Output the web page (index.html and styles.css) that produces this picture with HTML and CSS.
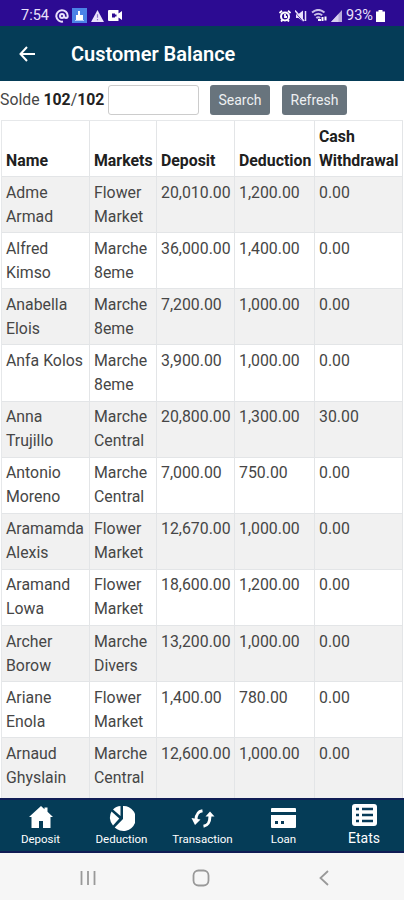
FILE: index.html
```
<!DOCTYPE html>
<html lang="en">
<head>
    <meta charset="UTF-8">
    <meta name="viewport" content="width=device-width, initial-scale=1.0">
    <title>Customer Balance</title>
    <link rel="stylesheet" href="styles.css">
</head>
<body>
    <div class="status">
        <div class="status-left">
            <span class="time">7:54</span>
            <svg width="14" height="14" viewBox="0 0 14 14" fill="none" stroke="#e9e1fb" stroke-width="2"><path d="M8 12.600A5.700 5.700 0 1 1 12.700 7c0 2.600-3.300 2.600-3.600 0"/><circle cx="7" cy="7" r="2"/></svg>
            <svg class="app" width="15" height="15" viewBox="0 0 15 15"><path fill="#4b83e6" d="M0 0h15v15H0z"/><path fill="#fff" d="M4 7h2V3h2v4h3v5H4z"/><path stroke="#b7d0fb" d="M3 12.500h9"/></svg>
            <svg width="13" height="12" viewBox="0 0 14 13"><path fill="#e9e1fb" d="M7 0l7 13H0z"/><path stroke="#8d75cc" stroke-width="1.300" d="M7 4.500v4M7 9.700V11"/></svg>
            <svg class="cam" width="14" height="11" viewBox="0 0 14 11"><path fill="#fff" d="M1 0h9.500v3.500L14 1v9l-3.500-2.500V11H1a1 1 0 0 1-1-1V1a1 1 0 0 1 1-1z"/><path fill="#2c0b92" d="M4 3.500h3v1h1.500v2H7v1H4z"/></svg>
        </div>
        <div class="status-right">
            <svg width="12" height="12" viewBox="0 0 12 12"><circle cx="6" cy="6.500" r="4" fill="none" stroke="#fff" stroke-width="2"/><path fill="none" stroke="#fff" stroke-width="1.800" d="M.5 3L3 .8M11.500 3L9 .8M2 11.500l1.500-1.500M10 11.500L8.500 10M6 4v3h2"/></svg>
            <svg width="12" height="12" viewBox="0 0 12 12"><path fill="#e9e1fb" d="M1 4h2.500L8 .5v11L3.500 8H1z"/><path stroke="#2c0b92" d="M0 2l8 9.500"/><path stroke="#e9e1fb" stroke-width="1.500" d="M0 .5l9 10.500M10.500 1v10"/></svg>
            <svg width="16" height="13" viewBox="0 0 16 13" fill="none" stroke="#c9bfe8" stroke-width="2"><path d="M1 3.500c4-3.300 8.500-3.300 12.500 0M3.300 6.300c2.600-2 5.300-2 7.900 0M5.300 9c1.300-1 2.600-1 3.900 0"/><path stroke="#fff" d="M7 11h3M11.500 8v4M14.500 7.500v4"/></svg>
            <svg width="11" height="12" viewBox="0 0 11 12"><path fill="#b9add9" d="M11 0v12H0z"/><path fill="#d9d1f0" d="M7.500 4v8H0z"/></svg>
            <span class="percent">93%</span>
            <svg class="battery" width="9" height="12" viewBox="0 0 9 12"><path fill="#fff" d="M2.500 0h4v1.500H9V12H0V1.500h2.500z"/></svg>
        </div>
    </div>

    <div class="header">
        <svg width="17" height="16" viewBox="0 0 17 16" fill="none" stroke="#fff" stroke-width="2"><path d="M8 1L1.500 8 8 15M1.500 8H16"/></svg>
        <h1>Customer Balance</h1>
    </div>

    <div class="search">
        <span class="solde">Solde <b>102</b>/<b>102</b></span>
        <input type="text" id="search">
        <button class="btn">Search</button>
        <button class="btn btn-refresh">Refresh</button>
    </div>

    <div class="content">
        <table>
            <colgroup>
                <col class="c-name"><col class="c-market"><col class="c-deposit"><col class="c-deduction"><col class="c-cash">
            </colgroup>
            <thead>
                <tr><th>Name</th><th>Markets</th><th>Deposit</th><th>Deduction</th><th>Cash<br>Withdrawal</th></tr>
            </thead>
            <tbody>
                <tr><td>Adme<br>Armad</td><td>Flower<br>Market</td><td>20,010.00</td><td>1,200.00</td><td>0.00</td></tr>
                <tr><td>Alfred<br>Kimso</td><td>Marche<br>8eme</td><td>36,000.00</td><td>1,400.00</td><td>0.00</td></tr>
                <tr><td>Anabella<br>Elois</td><td>Marche<br>8eme</td><td>7,200.00</td><td>1,000.00</td><td>0.00</td></tr>
                <tr><td>Anfa Kolos</td><td>Marche<br>8eme</td><td>3,900.00</td><td>1,000.00</td><td>0.00</td></tr>
                <tr><td>Anna<br>Trujillo</td><td>Marche<br>Central</td><td>20,800.00</td><td>1,300.00</td><td>30.00</td></tr>
                <tr><td>Antonio<br>Moreno</td><td>Marche<br>Central</td><td>7,000.00</td><td>750.00</td><td>0.00</td></tr>
                <tr><td>Aramamda<br>Alexis</td><td>Flower<br>Market</td><td>12,670.00</td><td>1,000.00</td><td>0.00</td></tr>
                <tr><td>Aramand<br>Lowa</td><td>Flower<br>Market</td><td>18,600.00</td><td>1,200.00</td><td>0.00</td></tr>
                <tr><td>Archer<br>Borow</td><td>Marche<br>Divers</td><td>13,200.00</td><td>1,000.00</td><td>0.00</td></tr>
                <tr><td>Ariane<br>Enola</td><td>Flower<br>Market</td><td>1,400.00</td><td>780.00</td><td>0.00</td></tr>
                <tr class="last"><td>Arnaud<br>Ghyslain</td><td>Marche<br>Central</td><td>12,600.00</td><td>1,000.00</td><td>0.00</td></tr>
            </tbody>
        </table>
    </div>

    <div class="tabs">
        <div class="tab">
            <svg width="24" height="22" viewBox="0 0 24 22"><path fill="#fff" d="M12 0l3.500 3.200V1.500h3v4.300L24 11h-2.500v11H14v-7h-4v7H2.500V11H0z"/></svg>
            <span>Deposit</span>
        </div>
        <div class="tab tab-deduction">
            <svg width="26" height="25" viewBox="0 0 26 25" fill="#fff"><path d="M14 0a12.500 12.500 0 1 1-8.300 21.500L14 13z"/><path d="M11.500 0v10L4 3.500A11 11 0 0 1 11.500 0z"/><path d="M2.500 5.500l7.800 7L4 19.500a12 12 0 0 1-1.500-14z"/></svg>
            <span>Deduction</span>
        </div>
        <div class="tab">
            <svg width="24" height="19" viewBox="0 0 24 19" fill="none" stroke="#fff" stroke-width="3"><path d="M11.500 1.800C7 2.500 5.200 5 5 11M12.500 17.200C17 16.500 18.800 14 19 7"/><path fill="#fff" stroke="none" d="M.5 9l9 1.500L4 16zM14.500 7.500L19 2.500l4.500 5z"/></svg>
            <span>Transaction</span>
        </div>
        <div class="tab">
            <svg width="25" height="20" viewBox="0 0 25 20"><path fill="#fff" d="M1 0h23a1 1 0 0 1 1 1v3H0V1a1 1 0 0 1 1-1zM0 7h25v12a1 1 0 0 1-1 1H1a1 1 0 0 1-1-1z"/><path fill="#073a57" d="M4 13h3v3H4zM10 13h3v3h-3z"/></svg>
            <span>Loan</span>
        </div>
        <div class="tab tab-etats">
            <svg width="25" height="22" viewBox="0 0 25 22"><rect width="25" height="22" rx="3" fill="#fff"/><path stroke="#073a57" stroke-width="2.500" d="M4 5h3M10 5h11M4 11h3M10 11h11M4 17h3M10 17h11"/></svg>
            <span>Etats</span>
        </div>
    </div>

    <div class="nav">
        <svg width="16" height="16" viewBox="0 0 16 16" stroke="#999" stroke-width="1.800"><path d="M1.500 1v14M8 1v14M14.500 1v14"/></svg>
        <svg width="18" height="18" viewBox="0 0 18 18" fill="none" stroke="#999" stroke-width="1.800"><rect x="1.500" y="1.500" width="15" height="15" rx="5"/></svg>
        <svg width="10" height="16" viewBox="0 0 10 16" fill="none" stroke="#999" stroke-width="1.800"><path d="M9 1L1.500 8 9 15"/></svg>
    </div>
</body>
</html>
```
FILE: styles.css
```
*{
    box-sizing: border-box;
}

body{
    margin: 0;
    height: 900px;
    overflow: hidden;
    display: flex;
    flex-direction: column;
    font-family: Roboto, "Liberation Sans", sans-serif;
    background-color: #fff;
    color: #464646;
}

svg{
    display: block;
    flex: none;
}

.status{
    height: 26px;
    flex: none;
    padding: 5px 19px 0 21px;
    display: flex;
    justify-content: space-between;
    background-color: #2c0b92;
    color: #e9e1fb;
}

.status-left,
.status-right{
    height: 21px;
    display: flex;
    align-items: center;
}

.time{
    width: 34px;
    font-size: 14.5px;
}

.app{
    margin: 0 4px 0 3px;
}

.cam{
    margin-left: 4px;
}

.status-right{
    gap: 4px;
}

.percent{
    width: 27px;
    font-size: 14.5px;
}

.battery{
    margin-left: -1px;
}

.header{
    height: 55px;
    flex: none;
    padding: 0 19px;
    display: flex;
    align-items: center;
    gap: 35px;
    background-color: #053c57;
    color: #fff;
}

.header h1{
    margin: 0;
    font-size: 20px;
    font-weight: 600;
}

.search{
    height: 39px;
    flex: none;
    padding-top: 4px;
    display: flex;
    align-items: flex-start;
}

.solde{
    width: 108px;
    line-height: 30px;
    font-size: 15.800px;
    white-space: nowrap;
}

.solde b{
    color: #222;
}

input[type = text]{
    width: 91px;
    height: 30px;
    border: 1px solid #ccc;
    border-radius: 3px;
    margin-right: 11px;
}

.btn{
    width: 60px;
    height: 30px;
    padding: 0;
    border: 0;
    border-radius: 3px;
    background-color: #68747d;
    color: #eef0f2;
    font-family: inherit;
    font-size: 14px;
}

.btn-refresh{
    width: 65px;
    margin-left: 12px;
}

.content{
    height: 678px;
    flex: none;
    overflow: hidden;
    padding-left: 1px;
}

table{
    width: 402px;
    table-layout: fixed;
    border-collapse: separate;
    border-spacing: 0;
    border-top: 1px solid #e6e8ea;
    border-left: 1px solid #e6e8ea;
    font-size: 15.850px;
    line-height: 24px;
}

.c-name{ width: 88px; }
.c-market{ width: 67px; }
.c-deposit{ width: 78px; }
.c-deduction{ width: 80px; }
.c-cash{ width: 88px; }

th,
td{
    height: 56.150px;
    padding: 3.500px 0 3.500px 4px;
    border-right: 1px solid #e3e5e7;
    border-bottom: 1px solid #e3e5e7;
    text-align: left;
    vertical-align: top;
    white-space: nowrap;
}

th{
    height: 55px;
    vertical-align: bottom;
    color: #202020;
}

tbody tr:nth-child(odd){
    background-color: #f1f1f1;
}

/* runs on under the tab bar */
.last td{
    height: 64px;
}

.tabs{
    height: 55px;
    flex: none;
    display: grid;
    grid-template-columns: 81px 81px 81px 81px 80px;
    background-color: #053c57;
    border-top: 2px solid #101d55;
    border-bottom: 2px solid #101d55;
    color: #fff;
}

.tab{
    display: flex;
    flex-direction: column;
    align-items: center;
    justify-content: flex-end;
    font-size: 11.500px;
    line-height: 14px;
    padding-bottom: 5px;
    gap: 4px;
}

.tab-deduction{
    gap: 1px;
}

.tab-etats{
    font-size: 14px;
    padding-bottom: 6px;
    gap: 5px;
}

.nav{
    flex: 1;
    background-color: #f6f6f6;
    display: flex;
    align-items: center;
    padding: 2px 0 0 80px;
}

.nav svg:nth-child(2){
    margin: 0 109px 0 96px;
}
```
